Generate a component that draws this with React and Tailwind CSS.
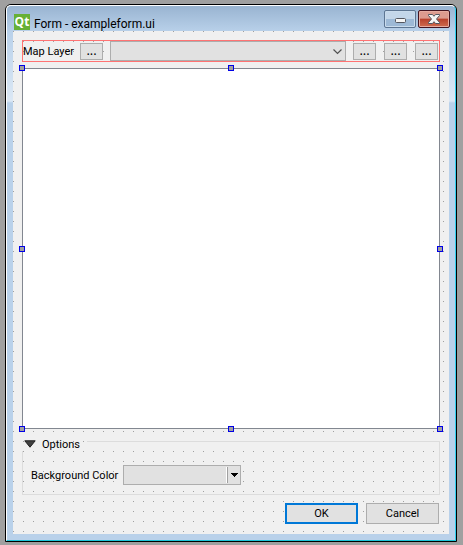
import React from "react";

const handles = [
  "left-0 top-0",
  "left-1/2 top-0",
  "left-full top-0",
  "left-0 top-1/2",
  "left-full top-1/2",
  "left-0 top-full",
  "left-1/2 top-full",
  "left-full top-full",
];

function ToolButton({ label }) {
  return (
    <button
      type="button"
      aria-label={label}
      className="h-[17px] w-[23px] shrink-0 border border-[#adadad] bg-[#e1e1e1] pb-[3px] text-center font-['Open_Sans','Noto_Sans',sans-serif] text-[13px] leading-3"
    >
      ...
    </button>
  );
}

function TitleBar() {
  return (
    <header className="flex h-[26px] items-start justify-between pl-[7px] pr-[5px]">
      <div className="flex items-start gap-1 pt-2">
        <span className="flex size-4 items-center justify-center bg-[#67b035] font-['Open_Sans','Noto_Sans',sans-serif] text-[12px] leading-4 font-bold text-white">
          Qt
        </span>
        <h1 className="pt-[2px] font-['Roboto','Noto_Sans',sans-serif] text-[12px] leading-4 whitespace-nowrap">
          Form - exampleform.ui
        </h1>
      </div>
      <div className="flex gap-[2px] pt-1">
        <button
          type="button"
          aria-label="Minimize"
          className="flex h-[18px] w-8 items-center justify-center rounded-[2px] border border-[#5d7592] bg-linear-to-b from-[#c3d6e9] from-50% to-[#9db9d6] to-50% shadow-[inset_0_0_0_1px_#c9dbec]"
        >
          <svg width="11" height="5" viewBox="0 0 11 5" className="mt-[2px]">
            <rect x="0.5" y="0.5" width="10" height="4" rx="1" fill="#f5f5f5" stroke="#53565f" />
          </svg>
        </button>
        <button
          type="button"
          aria-label="Close"
          className="flex h-[18px] w-8 items-center justify-center rounded-[2px] border border-[#431420] bg-linear-to-b from-[#dd9b8f] from-45% via-[#b8402b] via-50% to-[#cf6c50] shadow-[inset_0_0_0_1px_#e6aba0]"
        >
          <svg width="12" height="10" viewBox="0 0 12 10">
            <path
              d="M.5 .5h4L6 2.300 7.500 .5h4v1L8.500 5l3 3.500v1h-4L6 7.700 4.500 9.500h-4v-1l3-3.500L.5 1.500z"
              fill="#f5f5f5"
              stroke="#53565f"
            />
          </svg>
        </button>
      </div>
    </header>
  );
}

function LayerRow() {
  return (
    <div className="flex h-[22px] items-center gap-[7px] border border-[#ff7373] pr-px">
      <label htmlFor="layer" className="w-[50px] shrink-0 pt-[2px] whitespace-nowrap">
        Map Layer
      </label>
      <ToolButton label="Choose layer" />
      <div className="relative flex-1">
        <select
          id="layer"
          className="block h-5 w-full appearance-none border border-[#adadad] bg-[#e1e1e1]"
        />
        <svg
          width="9"
          height="6"
          viewBox="0 0 9 6"
          className="pointer-events-none absolute top-2 right-1"
        >
          <path d="M.5 .5l4 4 4-4" fill="none" stroke="#505050" strokeWidth="1.200" />
        </svg>
      </div>
      <div className="flex gap-2">
        <ToolButton label="First tool" />
        <ToolButton label="Second tool" />
        <ToolButton label="Third tool" />
      </div>
    </div>
  );
}

function MapCanvas() {
  return (
    <div className="relative mt-[6px] flex-1 border border-[#828790] bg-white">
      <div className="absolute -inset-px">
        {handles.map((place) => (
          <span
            key={place}
            className={`absolute -mt-[3px] -ml-[3px] size-[6px] border border-[#0000e6] bg-[#a0a0a0] ${place}`}
          />
        ))}
      </div>
    </div>
  );
}

function OptionsGroup() {
  return (
    <section className="mt-3">
      <div className="flex h-[10px] items-start">
        <button
          type="button"
          aria-expanded="true"
          className="flex h-[6px] w-[65px] items-center gap-[6px] pl-[2px] leading-[6px]"
        >
          <svg width="12" height="8" viewBox="0 0 12 8" className="shrink-0">
            <path d="M.8 .8h10.400L6 7.200z" fill="#404040" stroke="#202020" />
          </svg>
          <span className="pt-[2px]">Options</span>
        </button>
        <span className="h-full flex-1 border-t border-r border-[#dcdcdc]" />
      </div>
      <div className="flex items-center gap-2 border-x border-b border-[#dcdcdc] pt-[14px] pb-[9px] pl-2">
        <label htmlFor="background-color" className="w-[84px] pt-[2px] whitespace-nowrap">
          Background Color
        </label>
        <button
          type="button"
          id="background-color"
          className="flex h-5 w-[118px] items-center justify-end border border-[#adadad] bg-[#e1e1e1]"
        >
          <span className="flex h-4 w-[13px] items-center justify-center border-l border-[#a0a0a0] shadow-[-1px_0_0_#fff]">
            <svg width="7" height="4" viewBox="0 0 7 4" shapeRendering="crispEdges">
              <path d="M0 0h7v1H6v1H5v1H4v1H3V3H2V2H1V1H0z" fill="#000" />
            </svg>
          </span>
        </button>
      </div>
    </section>
  );
}

export default function App() {
  return (
    <div className="flex min-h-screen flex-col bg-[#a0a0a0] pt-1 pr-[6px] pb-[3px] pl-[5px] font-['Roboto','Noto_Sans',sans-serif] text-[11px] leading-4 text-black">
      <div className="flex flex-1 flex-col rounded-t-[6px] border border-black">
        <div className="flex flex-1 flex-col rounded-t-[5px] border border-t-white border-r-[#2fd0f0] border-b-[#1bc5d8] border-l-white bg-[#b9d1ea] bg-[linear-gradient(#99b4d1,#b9d1ea_26px,#dce8f5_95px,#b9d1ea_97px)]">
          <TitleBar />
          <main className="mx-[6px] mb-[6px] -mt-px flex flex-1 flex-col bg-[linear-gradient(to_right,transparent_1px,#f0f0f0_1px),linear-gradient(to_bottom,#a0a0a0_1px,#f0f0f0_1px)] bg-size-[10px_10px] px-[9px] pt-[9px] pb-[10px]">
            <LayerRow />
            <MapCanvas />
            <OptionsGroup />
            <div className="mt-2 flex justify-end gap-2 pr-px">
              <button
                type="button"
                className="h-[21px] w-[73px] border-2 border-[#0078d7] bg-[#e1e1e1] pt-px"
              >
                OK
              </button>
              <button
                type="button"
                className="h-[21px] w-[73px] border border-[#adadad] bg-[#e1e1e1] pt-px"
              >
                Cancel
              </button>
            </div>
          </main>
        </div>
      </div>
    </div>
  );
}
